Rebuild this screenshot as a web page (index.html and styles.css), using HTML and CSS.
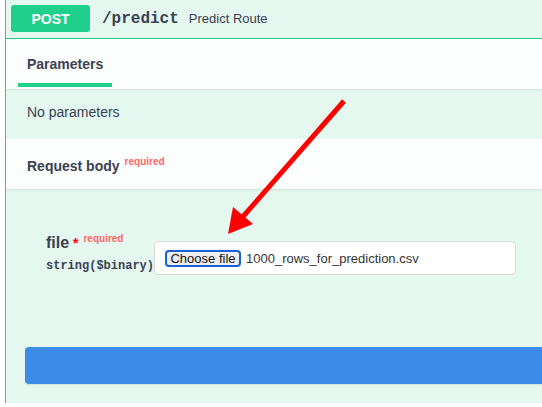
FILE: index.html
```html
<!DOCTYPE html>
<html>
<head>
<meta charset="utf-8">
<link rel="stylesheet" href="styles.css">
</head>
<body>
<div class="opblock">
  <div class="summary">
    <span class="method">POST</span>
    <span class="path">/predict</span>
    <span class="desc">Predict Route</span>
  </div>
  <div class="tabs">
    <div class="tab">Parameters</div>
  </div>
  <div class="noparams">No parameters</div>
  <div class="rb-header">
    <span class="rb-title">Request body</span><span class="rb-required">required</span>
  </div>
  <div class="rb-body">
    <div class="param-row">
      <div class="param-label">
        <div class="param-name">file<span class="star">&nbsp;*</span><span class="req">required</span></div>
        <div class="param-type">string($binary)</div>
      </div>
      <div class="file-box">
        <button class="choose" type="button">Choose file</button>
        <span class="filename">1000_rows_for_prediction.csv</span>
      </div>
    </div>
    <div class="execute"></div>
  </div>
</div>
<svg class="arrow" width="542" height="407" viewBox="0 0 542 407">
  <line x1="344" y1="101" x2="240" y2="220" stroke="#ff0000" stroke-width="5"/>
  <polygon points="228,234 233,207 253,224" fill="#ff0000"/>
</svg>
</body>
</html>
```
FILE: styles.css
```css
html, body {
  margin: 0;
  padding: 0;
}
body {
  width: 542px;
  height: 407px;
  overflow: hidden;
  background: #ffffff;
  font-family: "Liberation Sans", Arial, sans-serif;
  color: #3b4151;
  position: relative;
}
.opblock {
  margin-left: 5px;
  border-left: 1px solid #22cf8d;
  background: #e4f8f0;
  height: 403px;
  box-sizing: border-box;
}
.summary {
  display: flex;
  align-items: center;
  height: 39px;
  box-sizing: border-box;
  padding: 5px 5px 6px;
  border-bottom: 1px solid #22cf8d;
}
.method {
  display: flex;
  align-items: center;
  justify-content: center;
  width: 79px;
  height: 27px;
  background: #1fcf8c;
  border-radius: 3px;
  color: #fff;
  font-weight: 700;
  font-size: 14px;
}
.path {
  margin-left: 12px;
  font-family: "Liberation Mono", "Courier New", monospace;
  font-weight: 700;
  font-size: 16px;
  color: #3b4151;
}
.desc {
  margin-left: 10px;
  font-size: 13px;
  color: #3b4151;
}
.tabs {
  display: flex;
  height: 50px;
  box-sizing: border-box;
  padding-left: 12px;
  background: rgba(255, 255, 255, 0.85);
  box-shadow: 0 1px 2px rgba(0, 0, 0, 0.1);
  position: relative;
}
.tab {
  position: relative;
  padding: 17px 9px 0;
  font-size: 14px;
  line-height: 16px;
  font-weight: 700;
}
.tab::after {
  content: "";
  position: absolute;
  left: 0;
  right: 0;
  bottom: 2px;
  height: 4px;
  background: #1fcf8c;
}
.noparams {
  height: 50px;
  box-sizing: border-box;
  padding: 15px 21px 0;
  font-size: 14px;
  line-height: 16px;
}
.rb-header {
  height: 50px;
  box-sizing: border-box;
  padding: 19px 21px 0;
  background: rgba(255, 255, 255, 0.85);
  box-shadow: 0 1px 2px rgba(0, 0, 0, 0.1);
  position: relative;
  font-size: 14px;
  line-height: 16px;
}
.rb-title {
  font-weight: 700;
}
.rb-required {
  position: relative;
  top: -6px;
  margin-left: 5px;
  font-size: 10px;
  font-weight: 700;
  color: #ff6666;
}
.rb-body {
  padding: 45px 0 19px 19px;
}
.param-row {
  display: flex;
  align-items: flex-start;
  height: 42px;
  margin-left: 21px;
}
.param-label {
  width: 108px;
}
.param-name {
  font-size: 16px;
  font-weight: 700;
  line-height: 18px;
  white-space: nowrap;
}
.star {
  color: #ff0000;
  font-size: 14px;
}
.req {
  position: relative;
  top: -6px;
  padding-left: 5px;
  font-size: 10px;
  font-weight: 700;
  color: #ff6666;
}
.param-type {
  padding: 5px 0;
  font-family: "Liberation Mono", "Courier New", monospace;
  font-weight: 700;
  font-size: 12px;
  line-height: 14px;
  color: #3b4151;
  white-space: nowrap;
}
.file-box {
  margin-top: 7px;
  width: 362px;
  height: 34px;
  box-sizing: border-box;
  display: flex;
  align-items: center;
  padding-left: 10px;
  background: #ffffff;
  border: 1px solid #d9d9d9;
  border-radius: 4px;
}
.choose {
  width: 76px;
  height: 17px;
  box-sizing: border-box;
  padding: 0;
  border: 2px solid #1d5fd6;
  border-radius: 4px;
  background: #efefef;
  font-family: "Liberation Sans", Arial, sans-serif;
  font-size: 13px;
  line-height: 13px;
  color: #111;
}
.filename {
  margin-left: 5px;
  font-size: 13px;
  color: #333;
}
.execute {
  margin-top: 71px;
  height: 37px;
  background: #3d8be8;
  border-radius: 4px 0 0 4px;
  box-shadow: 0 1px 2px rgba(0, 0, 0, 0.1);
}
.arrow {
  position: absolute;
  left: 0;
  top: 0;
  pointer-events: none;
}
```
